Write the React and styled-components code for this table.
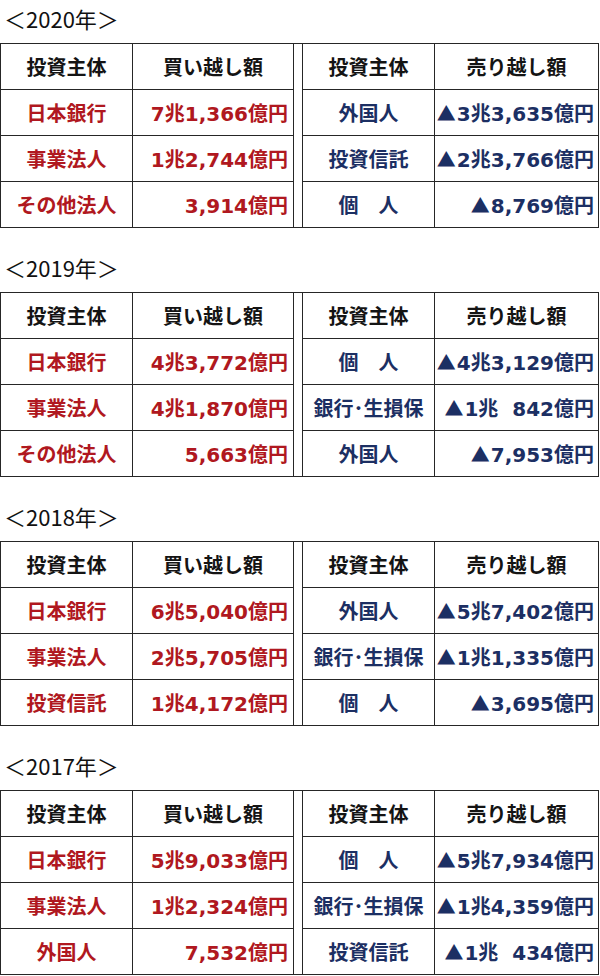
import React from 'react';
import styled, { createGlobalStyle } from 'styled-components';

const GlobalStyle = createGlobalStyle`
  body {
    margin: 0;
    background: #ffffff;
    font-family: "Noto Sans CJK JP", sans-serif;
  }
`;

const RED = '#b01820';
const NAVY = '#1c2f63';

const sections = [
  {
    year: 2020,
    buy: [['日本銀行', '7兆1,366億円'], ['事業法人', '1兆2,744億円'], ['その他法人', '3,914億円']],
    sell: [['外国人', '▲3兆3,635億円'], ['投資信託', '▲2兆3,766億円'], ['個　人', '▲8,769億円']],
  },
  {
    year: 2019,
    buy: [['日本銀行', '4兆3,772億円'], ['事業法人', '4兆1,870億円'], ['その他法人', '5,663億円']],
    sell: [['個　人', '▲4兆3,129億円'], ['銀行･生損保', '▲1兆\u2007842億円'], ['外国人', '▲7,953億円']],
  },
  {
    year: 2018,
    buy: [['日本銀行', '6兆5,040億円'], ['事業法人', '2兆5,705億円'], ['投資信託', '1兆4,172億円']],
    sell: [['外国人', '▲5兆7,402億円'], ['銀行･生損保', '▲1兆1,335億円'], ['個　人', '▲3,695億円']],
  },
  {
    year: 2017,
    buy: [['日本銀行', '5兆9,033億円'], ['事業法人', '1兆2,324億円'], ['外国人', '7,532億円']],
    sell: [['個　人', '▲5兆7,934億円'], ['銀行･生損保', '▲1兆4,359億円'], ['投資信託', '▲1兆\u2007434億円']],
  },
];

const Page = styled.div`
  display: flex;
  flex-direction: column;
  gap: 27px;
  padding-top: 6px;
  width: 600px;
`;

const Section = styled.section`
  display: flex;
  flex-direction: column;
  gap: 13px;
`;

const YearTitle = styled.h2`
  margin: 0;
  padding-left: 4px;
  height: 24px;
  line-height: 24px;
  font-size: 22px;
  font-weight: 400;
  color: #111111;
`;

const Board = styled.table`
  width: 598px;
  border-collapse: collapse;
  table-layout: fixed;

  td {
    border: 1px solid #262626;
    height: 45px;
    padding: 0;
    font-family: "DejaVu Sans", "Noto Sans CJK JP", sans-serif;
    font-size: 20px;
    font-weight: 700;
    white-space: pre;
  }
`;

const HeadCell = styled.td`
  text-align: center;
  color: #141414;
  font-family: "Noto Sans CJK JP", sans-serif !important;
`;

const NameCell = styled.td`
  text-align: center;
  color: ${(p) => p.$tone};
  font-family: "Noto Sans CJK JP", sans-serif !important;
`;

const AmountCell = styled.td`
  text-align: right;
  padding-right: ${(p) => p.$pad}px !important;
  color: ${(p) => p.$tone};
`;

const Mark = styled.span`
  font-family: "Noto Sans CJK JP", sans-serif;
  font-size: 19px;
  margin-right: 1px;
`;

const Divider = styled.td``;

const Amount = ({ text }) =>
  text.startsWith('▲') ? (
    <>
      <Mark>▲</Mark>
      {text.slice(1)}
    </>
  ) : (
    text
  );

const YearTable = ({ year, buy, sell }) => (
  <Section>
    <YearTitle>＜{year}年＞</YearTitle>
    <Board>
      <colgroup>
        <col style={{ width: 132 }} />
        <col style={{ width: 161 }} />
        <col style={{ width: 9 }} />
        <col style={{ width: 132 }} />
        <col style={{ width: 164 }} />
      </colgroup>
      <tbody>
        <tr>
          <HeadCell>投資主体</HeadCell>
          <HeadCell>買い越し額</HeadCell>
          <Divider rowSpan={4} />
          <HeadCell>投資主体</HeadCell>
          <HeadCell>売り越し額</HeadCell>
        </tr>
        {buy.map(([buyer, bought], i) => (
          <tr key={buyer}>
            <NameCell $tone={RED}>{buyer}</NameCell>
            <AmountCell $tone={RED} $pad={5}>
              <Amount text={bought} />
            </AmountCell>
            <NameCell $tone={NAVY}>{sell[i][0]}</NameCell>
            <AmountCell $tone={NAVY} $pad={4}>
              <Amount text={sell[i][1]} />
            </AmountCell>
          </tr>
        ))}
      </tbody>
    </Board>
  </Section>
);

const App = () => (
  <>
    <GlobalStyle />
    <Page>
      {sections.map((s) => (
        <YearTable key={s.year} {...s} />
      ))}
    </Page>
  </>
);

export default App;
